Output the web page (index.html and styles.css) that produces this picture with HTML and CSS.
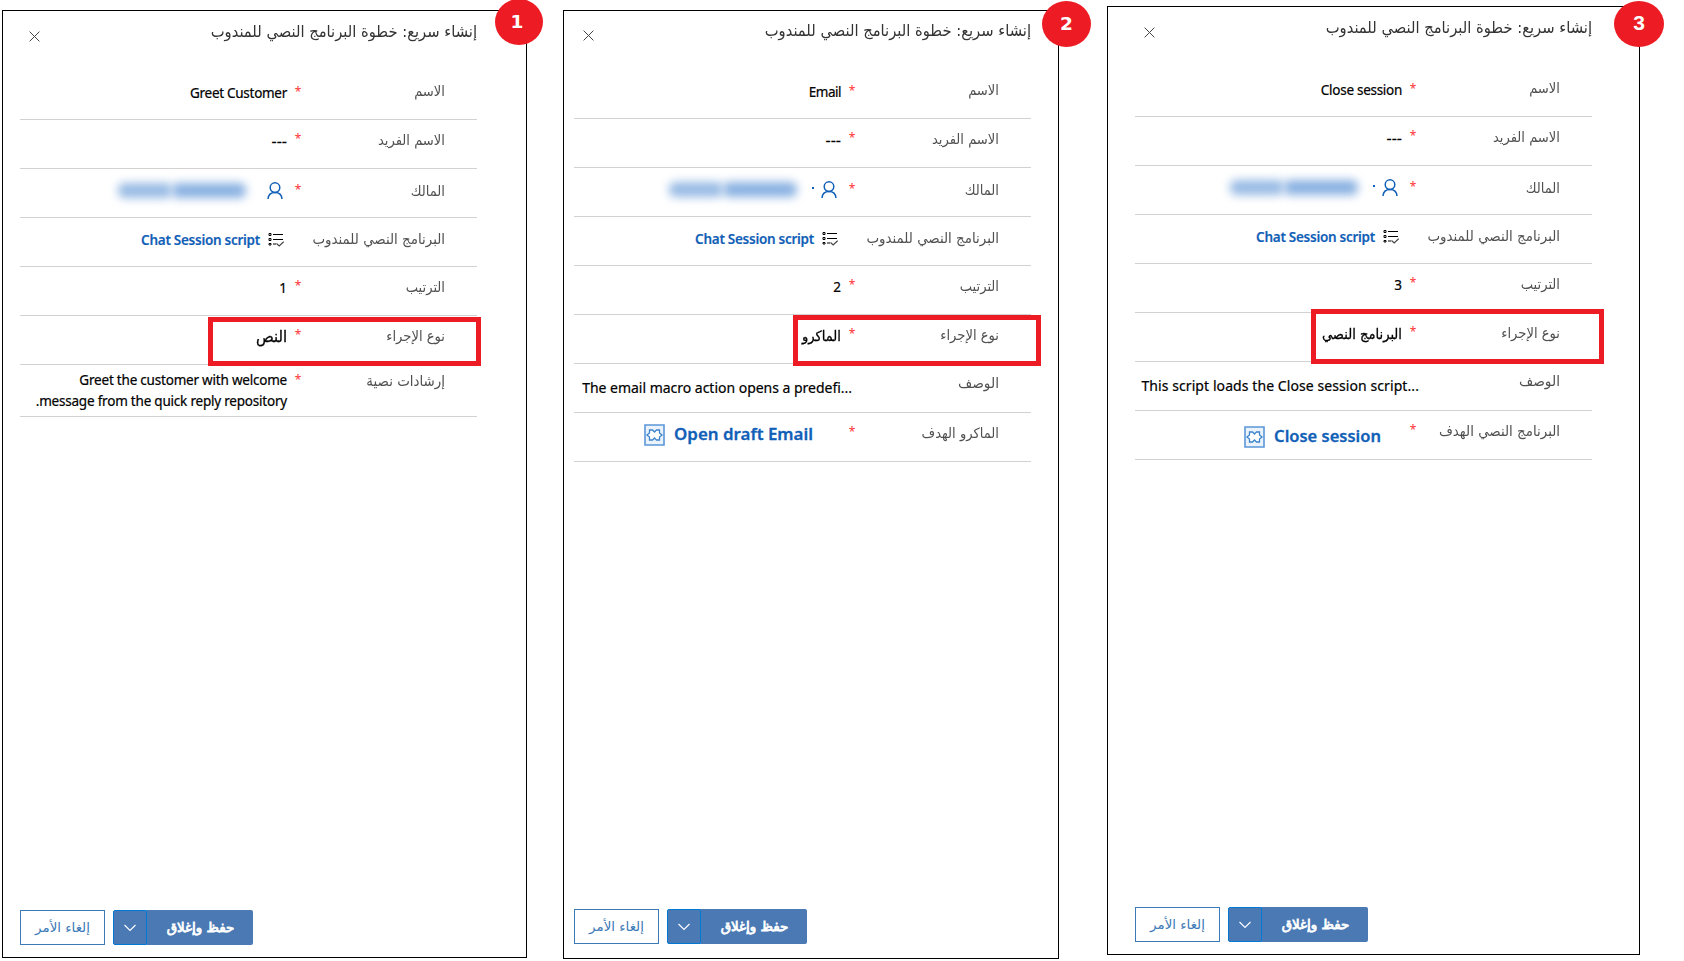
FILE: index.html
```html
<!DOCTYPE html>
<html lang="ar" dir="rtl">
<head>
<meta charset="utf-8">
<title>إنشاء سريع</title>
<link rel="stylesheet" href="styles.css">
</head>
<body>
<svg class="defs" width="0" height="0">
  <symbol id="close" viewBox="0 0 11 11"><path d="M.6.6l9.8 9.8M10.4.6L.6 10.4" fill="none" stroke="#444" stroke-width="1"/></symbol>
  <symbol id="person" viewBox="0 0 16 17"><circle cx="8" cy="5.6" r="4.8" fill="none" stroke="#1160b7" stroke-width="1.5"/><path d="M1 17c.3-4.300 3.200-6.600 7-6.600s6.700 2.300 7 6.600" fill="none" stroke="#1160b7" stroke-width="1.5"/></symbol>
  <symbol id="script" viewBox="0 0 16 15"><path d="M1 1.500h2v2H1zM1 6.500h2v2H1zM1 11.500h2v1.500H1z" fill="none" stroke="#000"/><path d="M5 2.500h10M5 7.500h10M5 12h3" fill="none" stroke="#000" stroke-width="1.200"/><path d="M8.500 11.500l2.700 2.500L15.700 9.800" fill="none" stroke="#444" stroke-width="1.200"/></symbol>
  <symbol id="macro" viewBox="0 0 21 22"><path d="M1 1h19v20H1z" fill="#eaf3fc" stroke="#5b97d6" stroke-width="1.600"/><path d="M5.500 6l3 0 2 2 2-2h3V9l2.500 2-2.500 2v3h-3L10.500 14 8.500 16h-3V13L3 11l2.500-2z" fill="#fff" stroke="#3d83cc" stroke-width="1.300"/></symbol>
  <symbol id="chev" viewBox="0 0 12 8"><path d="M.5 1L6 6.500 11.500 1" fill="none" stroke="#fff" stroke-width="1.100"/></symbol>
</svg>
<main class="stage">
  <section class="panel p1">
    <span class="badge">1</span>
    <header class="head"><h1>إنشاء سريع: خطوة البرنامج النصي للمندوب</h1><svg class="x"><use href="#close"/></svg></header>
    <div class="row first"><span class="label">الاسم</span><i>*</i><span class="value greet">Greet Customer</span></div>
    <div class="row"><span class="label">الاسم الفريد</span><i>*</i><span class="value dash">---</span></div>
    <div class="row owner"><span class="label">المالك</span><i>*</i><span class="value person"><svg><use href="#person"/></svg><span class="redact"><b></b><b></b></span></span></div>
    <div class="row lookup"><span class="label wide">البرنامج النصي للمندوب</span><i></i><a class="value link"><svg><use href="#script"/></svg><span>Chat Session script</span></a></div>
    <div class="row order"><span class="label">الترتيب</span><i>*</i><span class="value num">1</span></div>
    <div class="row type"><span class="label">نوع الإجراء</span><i>*</i><span class="value ar big">النص</span><span class="mark"></span></div>
    <div class="row text"><span class="label wide">إرشادات نصية</span><i>*</i><span class="value multi"><span>Greet the customer with welcome</span><span>message from the quick reply repository.</span></span></div>
    <footer class="foot"><button class="cancel">إلغاء الأمر</button><span class="split"><button class="drop"><svg><use href="#chev"/></svg></button><button class="save">حفظ وإغلاق</button></span></footer>
  </section>
  <section class="panel p2">
    <span class="badge">2</span>
    <header class="head"><h1>إنشاء سريع: خطوة البرنامج النصي للمندوب</h1><svg class="x"><use href="#close"/></svg></header>
    <div class="row first"><span class="label">الاسم</span><i>*</i><span class="value email">Email</span></div>
    <div class="row"><span class="label">الاسم الفريد</span><i>*</i><span class="value dash">---</span></div>
    <div class="row owner"><span class="label">المالك</span><i>*</i><span class="value person"><svg><use href="#person"/></svg><span class="redact dot"><b></b><b></b></span></span></div>
    <div class="row lookup"><span class="label wide">البرنامج النصي للمندوب</span><i></i><a class="value link"><svg><use href="#script"/></svg><span>Chat Session script</span></a></div>
    <div class="row order"><span class="label">الترتيب</span><i>*</i><span class="value num">2</span></div>
    <div class="row type"><span class="label">نوع الإجراء</span><i>*</i><span class="value ar">الماكرو</span><span class="mark"></span></div>
    <div class="row about-row"><span class="label desc">الوصف</span><i></i><span class="value about">The email macro action opens a predefi...</span></div>
    <div class="row"><span class="label">الماكرو الهدف</span><i>*</i><a class="value target"><span>Open draft Email</span><svg><use href="#macro"/></svg></a></div>
    <footer class="foot"><button class="cancel">إلغاء الأمر</button><span class="split"><button class="drop"><svg><use href="#chev"/></svg></button><button class="save">حفظ وإغلاق</button></span></footer>
  </section>
  <section class="panel p3">
    <span class="badge">3</span>
    <header class="head"><h1>إنشاء سريع: خطوة البرنامج النصي للمندوب</h1><svg class="x"><use href="#close"/></svg></header>
    <div class="row first"><span class="label">الاسم</span><i>*</i><span class="value name">Close session</span></div>
    <div class="row"><span class="label">الاسم الفريد</span><i>*</i><span class="value dash">---</span></div>
    <div class="row owner"><span class="label">المالك</span><i>*</i><span class="value person"><svg><use href="#person"/></svg><span class="redact dot"><b></b><b></b></span></span></div>
    <div class="row lookup"><span class="label wide">البرنامج النصي للمندوب</span><i></i><a class="value link"><svg><use href="#script"/></svg><span>Chat Session script</span></a></div>
    <div class="row order"><span class="label">الترتيب</span><i>*</i><span class="value num">3</span></div>
    <div class="row type"><span class="label">نوع الإجراء</span><i>*</i><span class="value ar">البرنامج النصي</span><span class="mark"></span></div>
    <div class="row about-row"><span class="label desc">الوصف</span><i></i><span class="value about">This script loads the Close session script...</span></div>
    <div class="row"><span class="label wide">البرنامج النصي الهدف</span><i>*</i><a class="value target"><span>Close session</span><svg><use href="#macro"/></svg></a></div>
    <footer class="foot"><button class="cancel">إلغاء الأمر</button><span class="split"><button class="drop"><svg><use href="#chev"/></svg></button><button class="save">حفظ وإغلاق</button></span></footer>
  </section>
</main>
</body>
</html>
```
FILE: styles.css
```css
* { box-sizing: border-box; }
body { margin: 0; background: #fff; overflow: hidden; }
.defs { position: absolute; }
.stage {
  direction: ltr;
  display: flex;
  align-items: flex-start;
  width: 1684px;
  height: 961px;
  padding-left: 2px;
  font: 13px/20px "DejaVu Sans", sans-serif;
}
.panel {
  position: relative;
  direction: rtl;
  display: flex;
  flex-direction: column;
  border: 1px solid #000;
}
.p1 { width: 525px; height: 948px; margin-top: 10px; padding: 0 49px 12px 17px; }
.p2 { width: 496px; height: 949px; margin: 10px 0 0 36px; padding: 0 27px 14px 10px; }
.p3 { width: 533px; height: 949px; margin: 6px 0 0 48px; padding: 0 47px 12px 27px; }

.badge {
  position: absolute;
  display: flex;
  align-items: center;
  justify-content: center;
  width: 48px;
  height: 46px;
  border-radius: 50%;
  background: #ed1c24;
  color: #fff;
  font: 700 18.5px/1 "DejaVu Sans", sans-serif;
}
.p1 .badge { right: -17px; top: -12px; padding-right: 4px; }
.p2 .badge { right: -33px; top: -10px; width: 49px; }
.p3 .badge { right: -25px; top: -6px; width: 50px; padding-bottom: 3px; font-family: "Liberation Sans", sans-serif; font-size: 21px; }

.head { display: flex; justify-content: space-between; align-items: flex-start; flex: none; }
.p1 .head { height: 59px; padding-top: 8px; }
.p2 .head { height: 58px; padding-top: 7px; }
.p3 .head { height: 60px; padding-top: 8px; }
h1 {
  width: 300px;
  margin: 0;
  font-size: 16.2px;
  line-height: 26px;
  font-weight: 400;
  color: #333;
  white-space: nowrap;
  transform: scaleX(.91);
  transform-origin: right center;
}
.x { width: 11px; height: 11px; margin: 12px 0 0 9px; }

.row {
  position: relative;
  flex: none;
  display: flex;
  height: 49px;
  padding: 10px 32px 0 0;
  border-bottom: 1px solid #d2d2d2;
  white-space: nowrap;
}
.first { height: 50px; padding-top: 11px; }
.label {
  flex: none;
  width: 141px;
  color: #505050;
  font-size: 14.2px;
  transform: scaleX(.925);
  transform-origin: right center;
}
.label.wide { font-size: 14.5px; }
.label.desc { font-size: 14.9px; }
.row i {
  flex: none;
  width: 12px;
  margin-top: -1px;
  color: #f33;
  font: 400 12px/20px "Noto Sans", sans-serif;
  text-align: center;
}
.first i { padding-top: 2px; }
.value {
  flex: none;
  width: 272px;
  padding: 1px 5px 0 0;
  color: #000;
  font: 400 13.5px/20px "Noto Sans", sans-serif;
  -webkit-text-stroke: .2px #000;
}
.dash { font-size: 16px; }
.greet { letter-spacing: -.28px; }
.email { letter-spacing: -.5px; }
.name { letter-spacing: -.28px; }
.first .value { padding-top: 2px; }
.value.ar {
  padding-right: 0;
  margin-right: 5px;
  font: 400 14.2px/20px "DejaVu Sans", sans-serif;
  -webkit-text-stroke: .3px #000;
  transform: scaleX(.925);
  transform-origin: right center;
}
.value.ar.big { font-size: 15.9px; }
.owner { padding-top: 12px; }
.lookup { padding-top: 11px; }
.type { padding-top: 10px; }
.text { height: 52px; padding-top: 6px; }
.about-row { padding-top: 9px; }
.multi { display: flex; flex-direction: column; line-height: 21px; padding-top: 0; margin-top: -1px; letter-spacing: -.21px; }
.about { direction: ltr; text-align: right; width: 290px; margin-top: 1px; }
.value.about { font-size: 14px; padding: 4px 0 0; }
.p2 .about { margin-right: -6px; letter-spacing: -.02px; }
.p3 .about { margin-right: -12px; letter-spacing: .08px; }
.link { display: flex; align-items: flex-start; gap: 8px; padding-right: 8px; color: #1160b7; font-weight: 600; font-size: 13.5px; letter-spacing: -.27px; -webkit-text-stroke: .15px #1160b7; }
.link svg { width: 16px; height: 15px; margin-top: 2px; }
.target { display: flex; align-items: flex-start; gap: 9px; padding-right: 33px; color: #1160b7; font-weight: 600; font-size: 16.9px; -webkit-text-stroke: .3px #1160b7; }
.target svg { width: 21px; height: 22px; }
.p3 .target { padding: 5px 26px 0 0; font-size: 16.5px; }
.person { display: flex; align-items: flex-start; padding: 3px 9px 0 0; }
.person svg { width: 16px; height: 17px; margin-top: -2px; }
.redact { position: relative; display: flex; direction: ltr; width: 128px; height: 15px; margin: -1px 21px 0 0; }
.redact b { filter: blur(5px); background: #97bae4; border-radius: 6px; }
.redact b:first-child { width: 54px; }
.redact b:last-child { width: 74px; background: #88b0e1; }
.redact.dot { margin-right: 24px; }
.dot::after { content: ""; position: absolute; right: -17px; top: 5px; width: 2px; height: 2px; background: #1160b7; }

.mark { position: absolute; border: 5px solid #ed1c24; }
.p1 .mark { right: -4px; top: 1px; width: 273px; height: 49px; }
.p2 .mark { right: -10px; top: 0; width: 248px; height: 51px; }
.p3 .mark { right: -12px; top: -4px; width: 293px; height: 55px; }

.foot { direction: ltr; display: flex; gap: 8px; margin-top: auto; }
button { height: 35px; margin: 0; padding: 0; font: 400 13.4px/33px "DejaVu Sans", sans-serif; direction: rtl; }
.cancel { width: 85px; border: 1px solid #3b79b7; background: #fff; color: #3b79b7; }
.split { display: flex; }
.drop { display: flex; align-items: center; justify-content: center; width: 34px; border: 1px solid #0078d4; border-radius: 2px 0 0 2px; background: #4a79b4; }
.drop svg { width: 12px; height: 8px; }
.save { width: 106px; padding-left: 1px; border: 0; border-radius: 0 2px 2px 0; background: #4a79b4; color: #fff; -webkit-text-stroke: .8px #fff; }
```
